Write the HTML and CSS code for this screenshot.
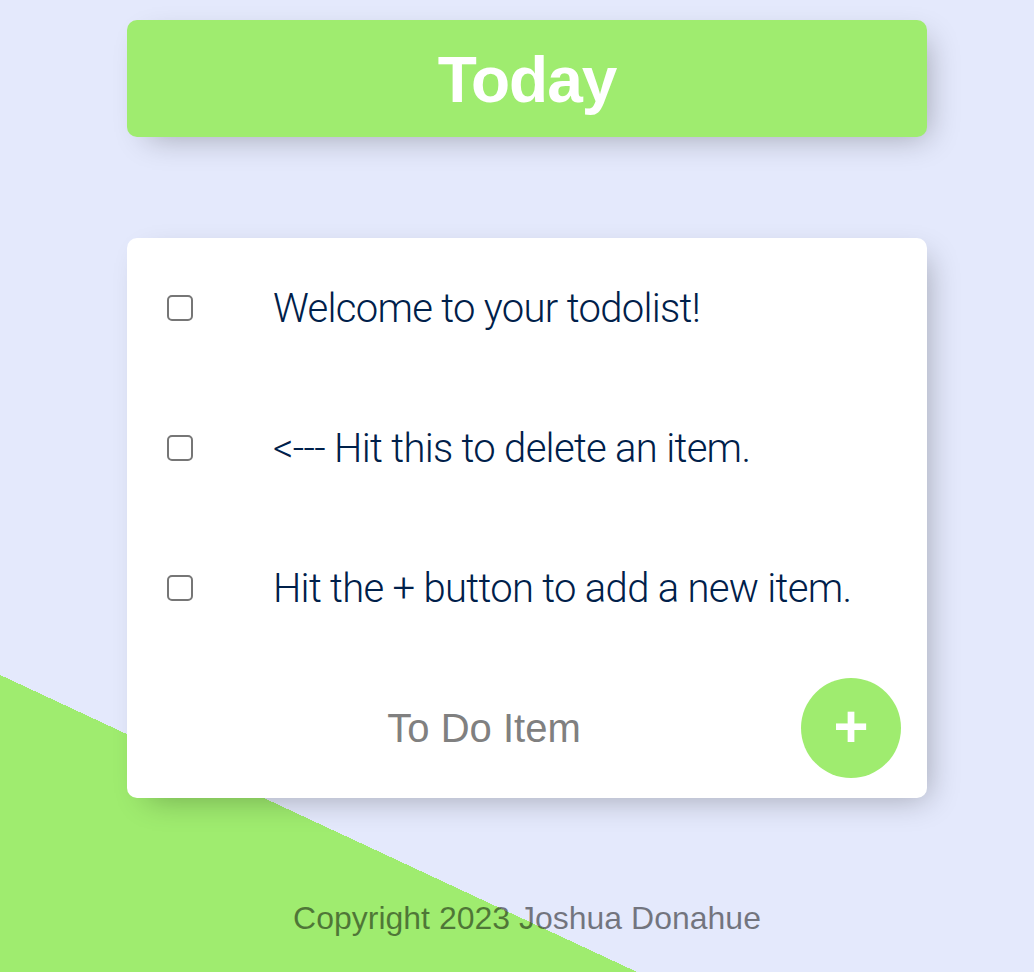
FILE: index.html
```html
<!DOCTYPE html>
<html lang="en">
<head>
<meta charset="utf-8">
<title>To-Do List</title>
<link rel="stylesheet" href="styles.css">
</head>
<body>
  <main class="page">
    <div class="box heading">
      <h1 class="heading-title">Today</h1>
    </div>

    <div class="box list">
      <div class="item">
        <input class="check" type="checkbox">
        <p class="item-text">Welcome to your todolist!</p>
      </div>
      <div class="item">
        <input class="check" type="checkbox">
        <p class="item-text">&lt;--- Hit this to delete an item.</p>
      </div>
      <div class="item">
        <input class="check" type="checkbox">
        <p class="item-text">Hit the + button to add a new item.</p>
      </div>
      <form class="add-form" onsubmit="return false;">
        <input class="new-item" type="text" name="newItem" placeholder="To Do Item" autocomplete="off">
        <button class="add-btn" type="submit">+</button>
      </form>
    </div>

    <footer class="footer">Copyright 2023 Joshua Donahue</footer>
  </main>
</body>
</html>
```

FILE: styles.css
```css
html {
  background-color: #E4E9FC;
  background-image: linear-gradient(25deg, #9FEC6F 50%, #E4E9FC 50%);
  background-size: 100% 1832px;
  background-repeat: no-repeat;
  height: 100%;
}

body {
  margin: 0;
  padding: 20px 0 0 20px;
  font-family: "Liberation Sans", Arial, sans-serif;
  overflow: hidden;
}

.page {
  display: flex;
  flex-direction: column;
  align-items: center;
}

.box {
  width: 800px;
  background: #ffffff;
  border-radius: 10px;
  box-shadow: 10px 10px 30px -10px rgba(0, 0, 0, 0.3);
}

.heading {
  background: #9FEC6F;
  height: 117px;
  box-sizing: border-box;
  padding-top: 4px;
  text-align: center;
}

.heading-title {
  margin: 0;
  color: #ffffff;
  font-size: 64px;
  line-height: 113px;
  font-weight: 700;
  letter-spacing: -1px;
}

.list {
  margin-top: 101px;
  display: flex;
  flex-direction: column;
}

.item {
  height: 140px;
  display: flex;
  align-items: center;
}

.check {
  -webkit-appearance: none;
  appearance: none;
  width: 26px;
  height: 26px;
  margin: 0 40px;
  border: 2px solid #767676;
  border-radius: 5px;
  background: #fff;
  box-sizing: border-box;
  flex: none;
}

.item-text {
  margin: 0;
  padding: 0 40px;
  font-family: Roboto, "Liberation Sans", sans-serif;
  font-size: 40px;
  font-weight: 300;
  letter-spacing: -0.7px;
  color: #00204a;
}

.add-form {
  height: 140px;
  display: flex;
  align-items: center;
  padding-left: 44px;
  gap: 4px;
}

.new-item {
  width: 626px;
  height: 120px;
  border: none;
  background: transparent;
  text-align: center;
  font-family: "Liberation Sans", Arial, sans-serif;
  font-size: 40px;
  padding: 0;
  outline: none;
}

.new-item::placeholder {
  color: #808080;
  opacity: 1;
}

.add-btn {
  width: 100px;
  height: 100px;
  border-radius: 50%;
  border: 0;
  background: #9FEC6F;
  color: #ffffff;
  font-family: "Liberation Sans", Arial, sans-serif;
  font-size: 60px;
  font-weight: 700;
  line-height: 1;
  padding: 0 0 2px;
  flex: none;
}

.footer {
  margin-top: 102px;
  font-size: 32px;
  color: rgba(0, 0, 0, 0.5);
  text-align: center;
}
```
